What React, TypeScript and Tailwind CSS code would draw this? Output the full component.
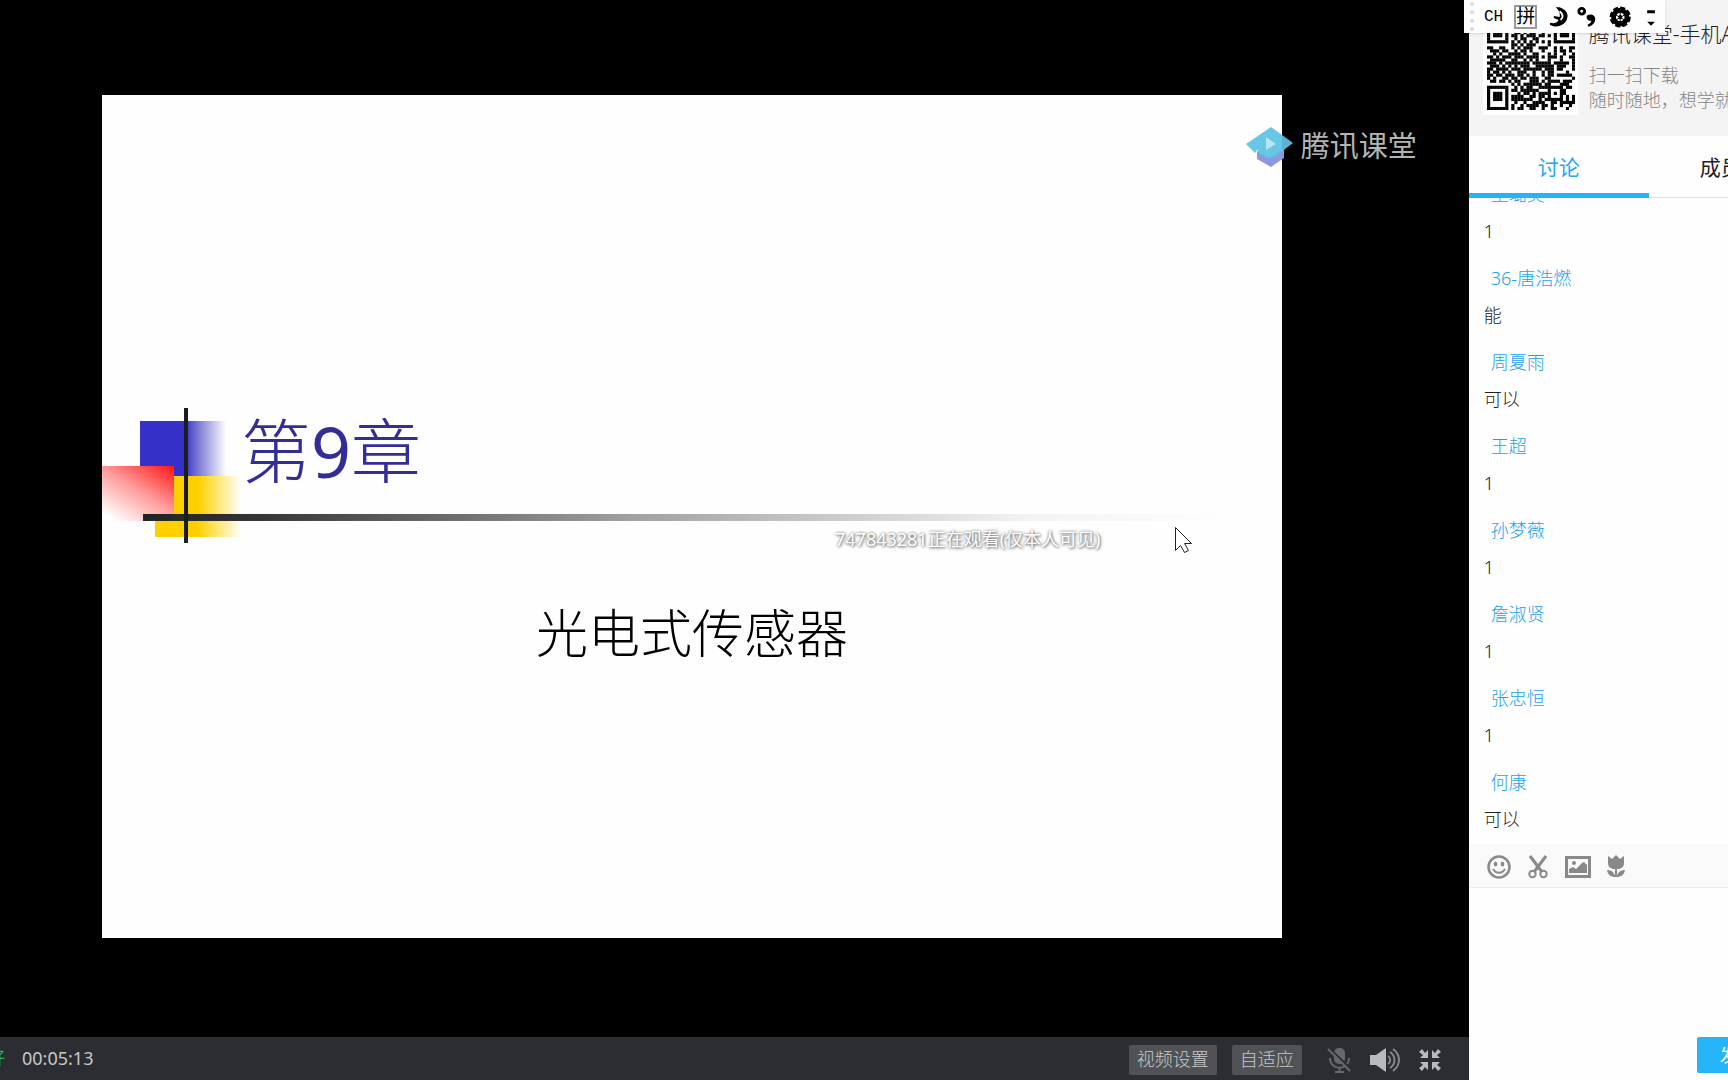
import { useState } from "react";
import { clsx } from "clsx";

const messages = [
  { name: "王璐奕", text: "1" },
  { name: "36-唐浩燃", text: "能" },
  { name: "周夏雨", text: "可以" },
  { name: "王超", text: "1" },
  { name: "孙梦薇", text: "1" },
  { name: "詹淑贤", text: "1" },
  { name: "张忠恒", text: "1" },
  { name: "何康", text: "可以" },
];

const qrRows = [
  "11111110010110100110101111111",
  "10000010110010111010001000001",
  "10111010001101001101101011101",
  "10111010011010110010001011101",
  "10111010110101110110101011101",
  "10000010010110011000001000001",
  "11111110101010101010101111111",
  "00000000110101110000100000000",
  "11001100101011100111001010011",
  "01110110010110100010001011010",
  "00101001111010011000101001001",
  "11010111011101111010111010011",
  "01111100110010101000100010001",
  "11101011111111011111101111101",
  "01110101010111001111110111001",
  "11011110111011111101110110001",
  "10110101001110010010110000100",
  "11011011101101010010110111110",
  "10100110110110111001100000001",
  "01101101011000111010111101110",
  "00000000101011111101100011100",
  "11111110010101100111111110110",
  "10000010110111111000100011000",
  "10111010001011010111101011000",
  "10111010111100110110100010101",
  "10111010111111100101111110101",
  "10000010010010011110011011111",
  "10000010100101111011010010010",
  "11111110101100110010011000100",
];

const QrCode = () => (
  <svg viewBox="0 0 29 29" className="h-[88px] w-[88px]" aria-label="二维码">
    {qrRows.map((row, y) =>
      row.split("").map((cell, x) =>
        cell === "1" ? <rect key={`${x}-${y}`} x={x} y={y} width="1.05" height="1.05" /> : null
      )
    )}
  </svg>
);

const SlideArt = () => (
  <svg viewBox="0 0 1180 135" className="col-start-1 row-start-1 w-full" aria-hidden="true">
    <defs>
      <linearGradient id="blue" x1="0" x2="1">
        <stop offset="0.52" stopColor="#3430c8" />
        <stop offset="0.65" stopColor="#706fd2" />
        <stop offset="1" stopColor="#fefefe" />
      </linearGradient>
      <linearGradient id="yellow" x1="0" x2="1">
        <stop offset="0.5" stopColor="#ffd000" />
        <stop offset="0.72" stopColor="#ffe66e" />
        <stop offset="1" stopColor="#fefefe" />
      </linearGradient>
      <linearGradient id="red" x1="1" y1="0" x2="0.2" y2="1">
        <stop offset="0" stopColor="#ff1414" />
        <stop offset="0.5" stopColor="#ff9a9a" />
        <stop offset="1" stopColor="#fefefe" />
      </linearGradient>
      <linearGradient id="rule" x1="0" x2="1">
        <stop offset="0" stopColor="#222" />
        <stop offset="0.1" stopColor="#333" />
        <stop offset="0.45" stopColor="#a0a0a0" />
        <stop offset="0.82" stopColor="#f3f3f3" />
        <stop offset="1" stopColor="#fefefe" />
      </linearGradient>
    </defs>
    <rect x="38" y="13" width="86" height="56" fill="url(#blue)" />
    <rect x="53" y="68" width="86" height="61" fill="url(#yellow)" />
    <rect x="0" y="58" width="72" height="55" fill="url(#red)" />
    <rect x="82" y="0" width="4" height="135" fill="#1c1c1c" />
    <rect x="41" y="106" width="1082" height="7" fill="url(#rule)" />
    <rect x="82" y="106" width="4" height="7" fill="#1c1c1c" />
  </svg>
);

const Brand = () => (
  <div className="absolute right-[52px] top-[122px] flex items-center gap-2 text-[#b4b4b4]">
    <svg width="48" height="44" viewBox="0 0 48 44" aria-hidden="true">
      <path d="M12 27v8l14 8 13-9v-10l-14 9z" fill="#8f97e0" />
      <path d="M1 20 26 3l22 16-17 13-7 3-11-6v-4l-3 4z" fill="#5cc3e2" opacity="0.93" />
      <path d="M21 13v13l10-6z" fill="#b8e6f4" />
    </svg>
    <span className="text-[29px] leading-[48px]">腾讯课堂</span>
  </div>
);

const Slide = () => (
  <section className="flex aspect-[1180/843] flex-col bg-[#fefefe] pt-[313px]">
    <div className="grid">
      <SlideArt />
      <h1 className="z-10 col-start-1 row-start-1 pl-[139px] text-[70px] leading-[86px] font-light text-[#332e96]">
        第<span className="font-normal">9</span>章
      </h1>
    </div>
    <p className="pt-[54px] text-center text-[52px] leading-[72px] font-light text-black">光电式传感器</p>
  </section>
);

const MicOffIcon = () => (
  <svg width="24" height="26" viewBox="0 0 24 26" fill="none" stroke="#66686c" strokeWidth="2">
    <rect x="7" y="1" width="11" height="16" rx="5" fill="#66686c" stroke="none" />
    <path d="M3 11c0 13 19 13 19 0M12.500 20v5M8 25h9" />
    <path d="M2 1l22 21" stroke="#2b2d32" strokeWidth="2" />
    <path d="M1 2l22 22" />
  </svg>
);

const SpeakerIcon = () => (
  <svg width="30" height="26" viewBox="0 0 30 26" fill="none" stroke="#85878a" strokeWidth="2">
    <path d="M0 8h6l10-7v24L6 18H0z" fill="#b9babc" stroke="none" />
    <path d="M18 9c3 2 3 6 0 8M20 5c6 4 6 12 0 16M23 2c8 6 8 16 0 22" />
  </svg>
);

const ShrinkIcon = () => (
  <svg width="24" height="24" viewBox="0 0 24 24" fill="#b9babc">
    <path d="M10 10H2l3-3-4-3 3-3 3 4 3-3zM14 10V2l3 3 3-4 3 3-4 3 3 3zM10 14v8l-3-3-3 4-3-3 4-3-3-3zM14 14h8l-3 3 4 3-3 3-3-4-3 3z" />
  </svg>
);

const Player = () => (
  <main className="flex min-w-0 flex-1 flex-col bg-black">
    <div className="relative min-h-0 flex-1 overflow-hidden pt-[95px] pr-[187px] pl-[102px]">
      <Slide />
      <Brand />
      <p className="absolute top-[526px] left-[835px] text-[18px] leading-[26px] text-white [text-shadow:0_0_3px_#777,1px_1px_3px_#777]">
        747843281正在观看(仅本人可见)
      </p>
      <svg className="absolute top-[526px] left-[1174px]" width="20" height="29" viewBox="0 0 20 29" aria-hidden="true">
        <path d="M1.500 1.500v23l5-5 4 7 4-2-4-7h7z" fill="#fff" stroke="#222" />
      </svg>
    </div>
    <footer className="flex h-[43px] shrink-0 items-center bg-[#2b2d32] pr-[27px] text-[18px] text-[#c8c8c8]">
      <span className="flex w-[22px] justify-end overflow-hidden pr-[17px] text-[#26b368]">好</span>
      <time>00:05:13</time>
      <div className="ml-auto flex items-center gap-[15px] pt-[2px]">
        <button className="h-[30px] rounded-xs bg-[#505256] px-2 font-light whitespace-nowrap">视频设置</button>
        <button className="mr-[10px] h-[30px] rounded-xs bg-[#505256] px-2 font-light whitespace-nowrap">自适应</button>
        <button className="w-7" aria-label="麦克风已关闭"><MicOffIcon /></button>
        <button className="w-[33px]" aria-label="音量"><SpeakerIcon /></button>
        <button aria-label="退出全屏"><ShrinkIcon /></button>
      </div>
    </footer>
  </main>
);

const EditorTools = () => (
  <div className="flex h-11 shrink-0 items-center gap-[15px] border-b border-[#ececee] bg-[#fafafb] pt-[2px] pl-[18px] text-[#87898b]">
    <button aria-label="表情">
      <svg width="24" height="24" viewBox="0 0 24 24" fill="none" stroke="currentColor" strokeWidth="2.500">
        <circle cx="12" cy="12" r="10.500" />
        <path d="M6 14c3 5 9 5 12 0" strokeWidth="2" />
        <ellipse cx="8.500" cy="9" rx="1.800" ry="2.600" fill="currentColor" stroke="none" />
        <ellipse cx="15.500" cy="9" rx="1.800" ry="2.600" fill="currentColor" stroke="none" />
      </svg>
    </button>
    <button aria-label="截图">
      <svg width="24" height="24" viewBox="0 0 24 24" fill="none" stroke="currentColor">
        <path d="M4 1l12 16M20 1L8 17" strokeWidth="3" />
        <circle cx="6.500" cy="19" r="3.200" strokeWidth="2" />
        <circle cx="17.500" cy="19" r="3.200" strokeWidth="2" />
      </svg>
    </button>
    <button aria-label="图片">
      <svg width="26" height="22" viewBox="0 0 26 22" fill="currentColor">
        <path d="M0 0h26v22H0zM3 3v16h20V3z" fillRule="evenodd" />
        <path d="M4 17v-4l4-2 3 2 6-6 2-1 3 3v8z" />
        <circle cx="9" cy="7" r="2" />
      </svg>
    </button>
    <button aria-label="献花">
      <svg width="20" height="24" viewBox="0 0 20 24" fill="currentColor">
        <path d="M2 1l4 3 4-4 4 4 4-3v7c0 4-3 6-7 6v7c1-4 4-6 8-6-1 5-4 7-8 7h-2c-4 0-7-2-8-7 4 0 7 2 8 6v-7c-4 0-7-2-7-6z" />
      </svg>
    </button>
  </div>
);

const tabs = ["讨论", "成员"];

const ChatPanel = () => {
  const [active, setActive] = useState(0);

  return (
    <aside className="flex w-[15%] shrink-0 flex-col overflow-hidden bg-[#fefefe] text-[#222]">
      {/* App download */}
      <header className="flex h-[136px] shrink-0 gap-[11px] bg-[#f4f4f4] pt-[18px] pl-[14px]">
        <div className="h-[97px] shrink-0 bg-white p-1 pr-[3px]">
          <QrCode />
        </div>
        <div className="whitespace-nowrap">
          <h2 className="pb-[13px] text-[21px] leading-8 font-light">腾讯课堂-手机APP</h2>
          <p className="text-[18px] leading-[25px] font-light text-[#858585]">扫一扫下载</p>
          <p className="text-[18px] leading-[25px] font-light text-[#858585]">随时随地，想学就学</p>
        </div>
      </header>

      {/* Tabs */}
      <div className="flex h-[62px] shrink-0">
        {tabs.map((tab, i) => (
          <button
            key={tab}
            onClick={() => setActive(i)}
            className={clsx(
              "w-[180px] shrink-0 text-[21px]",
              active === i
                ? "border-b-[5px] border-[#26b4f8] pt-[7px] text-[#26a9ec]"
                : "border-b border-[#ddd] pt-[2px] pl-[51px] text-left"
            )}
          >
            {tab}
          </button>
        ))}
      </div>

      {/* Messages */}
      <ul className="flex min-h-0 flex-1 flex-col justify-end overflow-hidden text-[18px] leading-[26px]">
        {messages.map((message, i) => (
          <li key={i} className="flex h-[84px] shrink-0 flex-col gap-[11px] pt-[9px] pl-[15px]">
            <span className="pl-[7px] font-light text-[#1ba2ea]">{message.name}</span>
            <span className="font-light">{message.text}</span>
          </li>
        ))}
      </ul>

      <EditorTools />
      <div className="flex h-[192px] shrink-0 flex-col">
        <textarea className="w-full flex-1 resize-none px-4 py-3 text-[18px] outline-none" aria-label="输入消息" />
        <button className="mb-[7px] ml-[228px] h-9 w-[82px] shrink-0 rounded-xs bg-[#26b4f8] text-[18px] text-white">
          发送
        </button>
      </div>
    </aside>
  );
};

const ImeBar = () => (
  <div className="absolute top-0 left-[1464px] flex h-[33px] w-[201px] items-center bg-[#fefefe] pl-[6px] text-black shadow-sm">
    <span className="h-[29px] border-l-4 border-dotted border-[#ddd]" />
    <span className="ml-[10px] w-[21px] font-['Liberation_Mono'] text-[16px]">CH</span>
    <span className="ml-[10px] flex h-6 w-6 items-center justify-center border-2 border-[#999] text-[19px] leading-none">拼</span>
    <svg className="ml-3" width="120" height="24" viewBox="0 0 120 24" aria-hidden="true">
      <path d="M7 2h4c8 3 10 8 7 14-3 5-11 8-17 4v-2c5 1 7 0 9-3l-5-2v-2l6 1c1-4-1-7-4-10z" />
      <path d="M11 6c4 3 4 7 1 9" fill="none" stroke="#fff" strokeWidth="2" />
      <circle cx="34" cy="6" r="3" fill="none" stroke="#000" strokeWidth="3" />
      <path d="M39 12c1-4 9-3 9 2 0 4-3 7-7 8l-1-2c3-1 4-3 4-4-3 0-5-1-5-4z" />
      <g transform="translate(5 0)">
        <circle cx="69" cy="12" r="7" fill="none" stroke="#000" strokeWidth="5" />
        <circle cx="69" cy="12" r="9" fill="none" stroke="#000" strokeWidth="4" strokeDasharray="5 2" />
        <circle cx="69" cy="12" r="2" />
        <path d="M69 5v14M63 9l12 7M75 9l-12 7" stroke="#000" strokeWidth="1" />
        <path d="M97 5h8v3h-8zM97 17h8l-4 4z" />
      </g>
    </svg>
  </div>
);

const App = () => {
  return (
    <div className="relative flex h-screen overflow-hidden font-['Noto_Sans','Noto_Sans_CJK_SC',sans-serif]">
      <Player />
      <ChatPanel />
      <ImeBar />
    </div>
  );
};

export default App;
